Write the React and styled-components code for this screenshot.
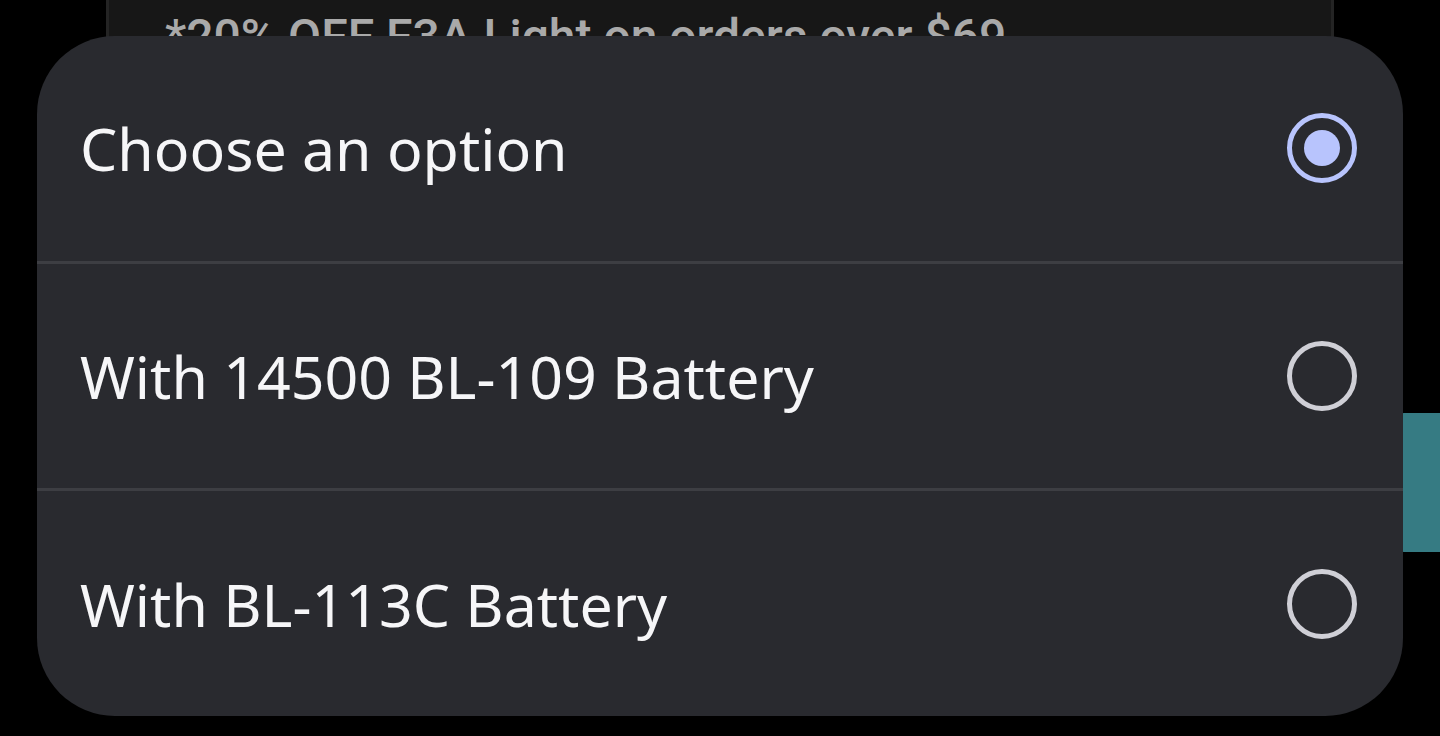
import React, { useState } from 'react';
import styled, { createGlobalStyle } from 'styled-components';

const GlobalStyle = createGlobalStyle`
  html, body {
    margin: 0;
    padding: 0;
    background: #000;
    overflow: hidden;
  }
  * { box-sizing: border-box; }
`;

const Page = styled.div`
  position: relative;
  width: 1440px;
  height: 736px;
  background: #000;
  overflow: hidden;
`;

const PromoCard = styled.div`
  margin: -40px 106px 0;
  height: 300px;
  background: #171717;
  border-left: 3px solid #242424;
  border-right: 3px solid #242424;
  padding: 49px 0 0 56px;
`;

const PromoText = styled.div`
  font-family: Roboto, 'Liberation Sans', sans-serif;
  font-weight: 500;
  font-size: 48px;
  line-height: 56px;
  color: #a9a9a9;
  white-space: nowrap;
`;

const SideButton = styled.div`
  position: absolute;
  right: 0;
  top: 413px;
  width: 40px;
  height: 139px;
  background: #367b83;
  border-radius: 4px 0 0 4px;
`;

const Sheet = styled.div`
  position: absolute;
  left: 37px;
  top: 36px;
  width: 1366px;
  height: 680px;
  background: #292a2f;
  border-radius: 78px;
  display: flex;
  flex-direction: column;
  overflow: hidden;
`;

const Option = styled.button`
  flex: 1;
  display: flex;
  align-items: center;
  justify-content: space-between;
  padding: 0 46px 0 43px;
  background: none;
  border: none;
  border-top: ${({ $first }) => ($first ? 'none' : '3px solid #3d3e43')};
  cursor: pointer;
  text-align: left;
`;

const Label = styled.span`
  font-family: 'Noto Sans', 'Open Sans', sans-serif;
  font-size: 59px;
  color: #f6f6f8;
`;

const Radio = styled.span`
  width: 70px;
  height: 70px;
  border-radius: 50%;
  border: 5px solid ${({ $checked }) => ($checked ? '#b8c4fd' : '#cfcfd6')};
  display: flex;
  align-items: center;
  justify-content: center;
  flex-shrink: 0;
`;

const Dot = styled.span`
  width: 36px;
  height: 36px;
  border-radius: 50%;
  background: #b8c4fd;
`;

const options = [
  'Choose an option',
  'With 14500 BL-109 Battery',
  'With BL-113C Battery',
];

export default function App() {
  const [selected, setSelected] = useState(0);

  return (
    <Page>
      <GlobalStyle />
      <PromoCard>
        <PromoText>*20% OFF F3A Light on orders over $69</PromoText>
      </PromoCard>
      <SideButton />
      <Sheet>
        {options.map((label, i) => (
          <Option key={label} $first={i === 0} onClick={() => setSelected(i)}>
            <Label>{label}</Label>
            <Radio $checked={selected === i}>{selected === i && <Dot />}</Radio>
          </Option>
        ))}
      </Sheet>
    </Page>
  );
}
